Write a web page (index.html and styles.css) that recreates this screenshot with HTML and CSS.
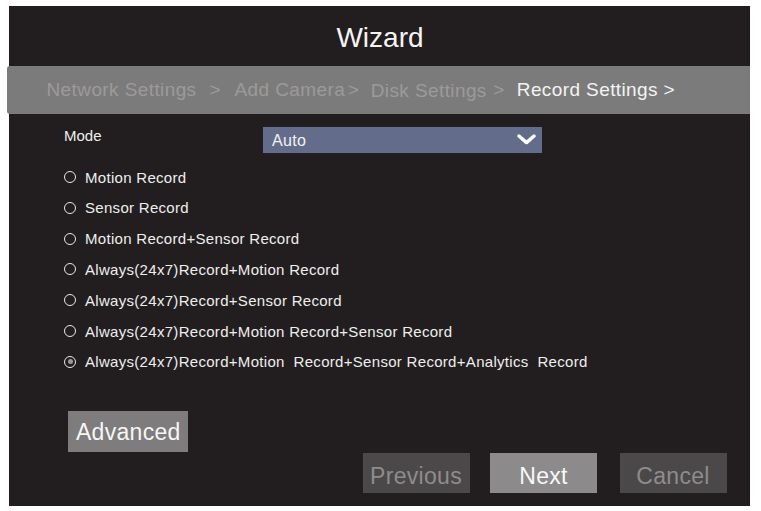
FILE: index.html
```html
<!DOCTYPE html>
<html lang="en">
<head>
<meta charset="utf-8">
<title>Wizard</title>
<link rel="stylesheet" href="styles.css">
</head>
<body>
<div class="panel">
  <div class="title">Wizard</div>
  <div class="steps">
    <span class="step s-net">Network Settings</span>
    <span class="sep sep1">&gt;</span>
    <span class="step s-cam">Add Camera</span>
    <span class="sep sep2">&gt;</span>
    <span class="step s-disk">Disk Settings</span>
    <span class="sep sep3">&gt;</span>
    <span class="step active s-rec">Record Settings</span>
    <span class="sep active sep4">&gt;</span>
  </div>
  <div class="form">
    <div class="mode-row">
      <span class="mode-label">Mode</span>
      <div class="select">
        <span class="select-value">Auto</span>
        <svg class="chevron" width="19" height="11" viewBox="0 0 19 11"><polyline points="2,2 9.5,8.6 17,2" fill="none" stroke="#ffffff" stroke-width="3.4" stroke-linecap="round" stroke-linejoin="round"/></svg>
      </div>
    </div>
    <div class="options">
      <div class="opt"><span class="radio"></span><span class="opt-text">Motion Record</span></div>
      <div class="opt"><span class="radio"></span><span class="opt-text">Sensor Record</span></div>
      <div class="opt"><span class="radio"></span><span class="opt-text">Motion Record+Sensor Record</span></div>
      <div class="opt"><span class="radio"></span><span class="opt-text">Always(24x7)Record+Motion Record</span></div>
      <div class="opt"><span class="radio"></span><span class="opt-text">Always(24x7)Record+Sensor Record</span></div>
      <div class="opt"><span class="radio"></span><span class="opt-text">Always(24x7)Record+Motion Record+Sensor Record</span></div>
      <div class="opt"><span class="radio checked"></span><span class="opt-text">Always(24x7)Record+Motion  Record+Sensor Record+Analytics  Record</span></div>
    </div>
    <div class="adv-wrap"><button class="btn adv">Advanced</button></div>
  </div>
  <div class="footer">
    <button class="btn dim">Previous</button>
    <button class="btn next">Next</button>
    <button class="btn dim">Cancel</button>
  </div>
</div>
</body>
</html>
```

FILE: styles.css
```css
html, body {
  margin: 0;
  padding: 0;
  background: #ffffff;
}
body {
  font-family: "Liberation Sans", Arial, sans-serif;
  width: 761px;
  height: 511px;
  overflow: hidden;
}
.panel {
  margin: 6px 0 0 9px;
  width: 741px;
  height: 500px;
  background: #221e1f;
  display: flex;
  flex-direction: column;
}
.title {
  height: 60px;
  line-height: 63px;
  text-align: center;
  color: #f4f4f4;
  font-size: 28px;
  padding-left: 1px;
}
.steps {
  margin-left: -2px;
  height: 48px;
  line-height: 48px;
  background: #7c7b7b;
  border-radius: 3px 0 0 3px;
  display: flex;
  padding-left: 39.5px;
  font-size: 19px;
  letter-spacing: 0.4px;
  color: #9c9a9a;
  white-space: nowrap;
}
.step, .sep { display: block; }
.sep1 { margin-left: 13px; }
.s-cam { margin-left: 13.5px; }
.sep2 { margin-left: 2.5px; }
.s-disk { margin-left: 11.5px; position: relative; top: 1px; }
.sep3 { margin-left: 6.5px; }
.s-rec { margin-left: 12px; }
.sep4 { margin-left: 5.5px; }
.active { color: #f3f3f3; }

.form {
  padding: 13px 0 0 55px;
  color: #eeeeee;
}
.mode-row {
  display: flex;
  align-items: flex-start;
  height: 26px;
}
.mode-label {
  font-size: 15px;
  line-height: 18px;
  width: 199px;
}
.select {
  width: 279px;
  height: 26px;
  background: #636d8b;
  display: flex;
  align-items: center;
  justify-content: space-between;
  padding: 0 6px 0 9px;
  box-sizing: border-box;
}
.select-value {
  font-size: 16px;
  line-height: 26px;
  letter-spacing: 0.3px;
  padding-top: 1px;
  color: #f2f2f2;
}
.chevron { display: block; margin-top: -1px; }

.options {
  margin-top: 9.7px;
  padding-left: 0;
}
.opt {
  display: flex;
  align-items: center;
  height: 30.8px;
  line-height: 30.8px;
  font-size: 15px;
  letter-spacing: 0.3px;
}
.opt-text { white-space: pre; }
.radio {
  width: 12px;
  height: 12px;
  box-sizing: border-box;
  border: 1.9px solid #e8e8e8;
  border-radius: 50%;
  margin-right: 9px;
  margin-top: -2px;
  display: flex;
  align-items: center;
  justify-content: center;
}
.radio.checked::after {
  content: "";
  width: 5px;
  height: 5px;
  border-radius: 50%;
  background: #9a9a9a;
}

.btn {
  font-family: "Liberation Sans", Arial, sans-serif;
  border: none;
  margin: 0;
  padding: 3px 0 0 0;
  box-sizing: border-box;
  font-size: 23px;
  letter-spacing: 0.3px;
  line-height: 40px;
  text-align: center;
}
.adv-wrap {
  margin-top: 32.7px;
  padding-left: 4.3px;
  display: flex;
}
.adv {
  width: 120px;
  height: 40.7px;
  padding-top: 1px;
  background: #7e7c7c;
  color: #f6f6f6;
}
.footer {
  display: flex;
  justify-content: flex-end;
  padding-right: 23.5px;
  margin-top: 1.6px;
  gap: 20.5px;
}
.footer .btn {
  width: 107px;
  height: 40px;
}
.dim {
  background: #4b4849;
  color: #8e8c8c;
}
.next {
  background: #8c8a8a;
  color: #f8f8f8;
}
.footer .next { margin-right: 2px; }
```
